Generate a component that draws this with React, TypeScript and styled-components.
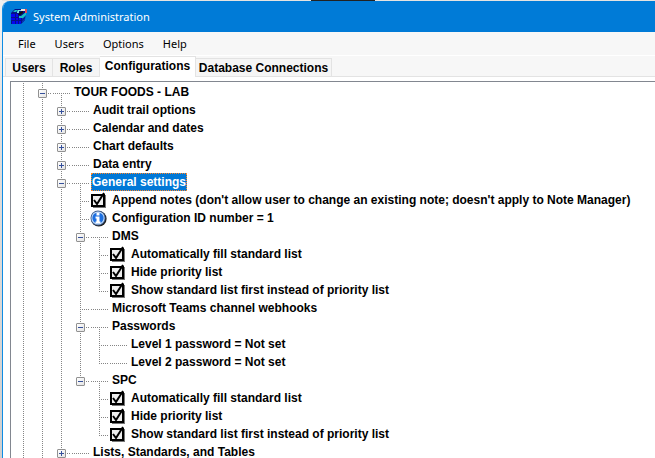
import React, { useState } from "react";
import styled, { createGlobalStyle, css } from "styled-components";

const GlobalStyle = createGlobalStyle`
  * { box-sizing: border-box; }
  body { margin: 0; overflow: hidden; background: #e3e1df; }
  button, input { font: inherit; color: inherit; margin: 0; padding: 0; }
`;

const Desktop = styled.div`
  display: flex;
  flex-direction: column;
  height: 100vh;
  padding-left: 2px;
  background: linear-gradient(#efefef 0, #efefef 40px, #e2dedb 120px, #dcd9d6 280px, #cfcfcf 100%);
`;

const BackdropEdge = styled.div`
  flex: none;
  height: 1px;
  background: linear-gradient(#222, #222) 309px 0 / 64px 1px no-repeat #e5e3e1;
`;

const Window = styled.main`
  flex: 1;
  min-height: 0;
  display: flex;
  flex-direction: column;
  border-left: 1px solid #0e8ce4;
  border-top-left-radius: 8px;
  background: #fff;
  overflow: hidden;
`;

const TitleBar = styled.header`
  flex: none;
  display: flex;
  align-items: center;
  gap: 5px;
  height: 31px;
  padding-left: 8px;
  background: #007bd7;
  color: #fff;
  font: 11px/16px "Noto Sans", "Open Sans", sans-serif;
`;

const Title = styled.h1`
  margin: 0;
  font: inherit;
`;

const MenuBar = styled.nav`
  flex: none;
  display: flex;
  gap: 19px;
  height: 24px;
  padding-left: 15px;
  background: #f7f7f7;
  border-bottom: 1px solid #fff;
  font: 11px/24px "Noto Sans", "Open Sans", sans-serif;
  color: #000;
`;

const MenuButton = styled.button`
  border: 0;
  background: none;
`;

const TabStrip = styled.div`
  flex: none;
  display: flex;
  align-items: flex-end;
  height: 21px;
  padding-left: 2px;
  background: linear-gradient(#e3e3e3, #e3e3e3) 0 100% / 100% 1px no-repeat #f7f7f7;
  font: bold 12px/16px "Liberation Sans", Arial, sans-serif;
  color: #000;
`;

const Tab = styled.button<{ $width: number }>`
  width: ${(p) => p.$width}px;
  height: 19px;
  border: 1px solid #e3e3e3;
  border-left-width: 0;
  background: #f5f5f5;
  white-space: nowrap;
  &:first-child { border-left-width: 1px; }
  &[aria-selected="true"] {
    height: 21px;
    padding-bottom: 3px;
    border-bottom: 0;
    background: #fff;
  }
`;

const TabPanel = styled.section`
  flex: 1;
  min-height: 0;
  display: flex;
  padding: 4px 0 0 7px;
`;

const TreeBox = styled.div`
  flex: 1;
  padding: 1px 0 0 3px;
  border: solid #828790;
  border-width: 1px 0 0 1px;
  overflow: hidden;
  font: bold 12px/18px "Liberation Sans", Arial, sans-serif;
  color: #000;
`;

const Row = styled.div`
  display: flex;
  height: 18px;
  white-space: nowrap;
`;

const vDots = "repeating-linear-gradient(#858585 0 1px, transparent 1px 2px)";
const hDots = "repeating-linear-gradient(90deg, #858585 0 1px, transparent 1px 2px)";

const GuideCell = styled.span<{ $line: boolean }>`
  flex: none;
  width: 19px;
  background: ${(p) => (p.$line ? `${vDots} 9px 0 / 1px 18px no-repeat` : "none")};
`;

const BranchCell = styled.span<{ $last: boolean }>`
  flex: none;
  display: flex;
  justify-content: center;
  align-items: flex-start;
  width: 19px;
  padding-top: 6px;
  background:
    ${vDots} 9px 0 / 1px ${(p) => (p.$last ? 11 : 18)}px no-repeat,
    ${hDots} 9px 10px / 10px 1px no-repeat;
`;

const IconCell = styled.span<{ $icon: boolean; $open: boolean }>`
  flex: none;
  display: flex;
  width: 20px;
  padding: 1px 0 0 0;
  ${(p) =>
    !p.$icon &&
    css`
      background:
        ${hDots} 1px 10px / 17px 1px no-repeat
        ${p.$open ? `, ${vDots} 9px 12px / 1px 6px no-repeat` : ""};
    `}
`;

const Expander = styled.button`
  display: flex;
  width: 9px;
  height: 9px;
  border: 1px solid #919191;
  border-radius: 1px;
  background: linear-gradient(135deg, #fff, #e4e4e4);
`;

const Label = styled.span<{ $selected: boolean }>`
  padding: 0 2px;
  ${(p) =>
    p.$selected &&
    css`
      padding: 0;
      border: 1px dotted #ff8728;
      background: #0078d7;
      color: #fff;
      line-height: 16px;
    `}
`;

const CheckLabel = styled.label`
  display: flex;
`;

const CheckBoxSlot = styled.span`
  position: relative;
  display: flex;
  flex: none;
  width: 20px;
  padding: 0 0 0 1px;
`;

const CheckInput = styled.input`
  position: absolute;
  inset: 0;
  opacity: 0;
`;

const CubeIcon = () => (
  <svg width="17" height="17" viewBox="0 0 17 17" aria-hidden="true">
    <path d="M0 5l4-4h11l-1 11-4 4H0z" fill="#04118a" />
    <path d="M0 6h4v3H0zM5 6h2v3H5zM0 10h4v2H0zM5 10h2v2H5zM8 10h2v2H8zM1 13h3v3H1zM5 13h2v3H5zM8 13h2v3H8z" fill="#0505f0" />
    <path d="M11 9l3-3v3l-3 3zM11 13l3-3v2l-3 3z" fill="#0a35b5" />
    <path d="M2 4l2-2h3L5 4zM10 8l5-4v3l-3 3H8V8z" fill="#18bfc4" />
    <path d="M7 2h4v1H8v2H6V4z" fill="#76e5df" />
    <path d="M9 4l3-1v2l-3 2H7z" fill="#111" />
    <path d="M10 1h4v2h-4z" fill="#e9e3df" />
    <path d="M14 1h2v4h-2z" fill="#e34a55" />
  </svg>
);

const CheckIcon = ({ checked }: { checked: boolean }) => (
  <svg width="16" height="17" viewBox="0 0 16 17" aria-hidden="true">
    <path d="M0 3h14v13H0z" fill="#000" />
    <path d="M14 4h1v13H2v-1h12z" fill="#777" />
    <path d="M2 5h10v9H2z" fill="#eee" />
    {checked && <path d="M3 9l3 4 7-11" fill="none" stroke="#000" strokeWidth="2" />}
  </svg>
);

const InfoIcon = () => (
  <svg width="17" height="17" viewBox="0 0 17 17" role="img" aria-label="Information">
    <circle cx="8.8" cy="8.8" r="7.8" fill="#222" />
    <circle cx="8" cy="8" r="7.5" fill="#3d5f94" />
    <circle cx="8" cy="8" r="6.6" fill="#c3dcf8" />
    <circle cx="8" cy="8" r="5.6" fill="#1d6fe0" />
    <path d="M6.5 2.5h3v3h-3zM5.5 6.5h4v5h1v2h-5v-2h1v-3h-1z" fill="#fff" />
  </svg>
);

const SignIcon = ({ open }: { open: boolean }) => (
  <svg width="7" height="7" viewBox="0 0 7 7" aria-hidden="true">
    <path d={open ? "M1 3h5v1H1z" : "M1 3h2V1h1v2h2v1H4v2H3V4H1z"} fill="#35509b" />
  </svg>
);

type Item = {
  id: string;
  text: string;
  kind?: "check" | "info";
  children?: Item[];
};

const listOptions = (prefix: string): Item[] => [
  { id: `${prefix}-fill`, text: "Automatically fill standard list", kind: "check" },
  { id: `${prefix}-hide`, text: "Hide priority list", kind: "check" },
  { id: `${prefix}-show`, text: "Show standard list first instead of priority list", kind: "check" },
];

const root: Item = {
  id: "site",
  text: "TOUR FOODS - LAB",
  children: [
    { id: "audit", text: "Audit trail options", children: [] },
    { id: "calendar", text: "Calendar and dates", children: [] },
    { id: "chart", text: "Chart defaults", children: [] },
    { id: "entry", text: "Data entry", children: [] },
    {
      id: "general",
      text: "General settings",
      children: [
        {
          id: "append",
          text: "Append notes (don't allow user to change an existing note; doesn't apply to Note Manager)",
          kind: "check",
        },
        { id: "config", text: "Configuration ID number = 1", kind: "info" },
        { id: "dms", text: "DMS", children: listOptions("dms") },
        { id: "teams", text: "Microsoft Teams channel webhooks" },
        {
          id: "passwords",
          text: "Passwords",
          children: [
            { id: "level1", text: "Level 1 password = Not set" },
            { id: "level2", text: "Level 2 password = Not set" },
          ],
        },
        { id: "spc", text: "SPC", children: listOptions("spc") },
      ],
    },
    { id: "lists", text: "Lists, Standards, and Tables", children: [] },
  ],
};

const initiallyOpen = ["site", "general", "dms", "passwords", "spc"];

type NodeProps = {
  item: Item;
  guides: boolean[];
  last: boolean;
  openIds: string[];
  onToggle: (id: string) => void;
  selected: string;
  onSelect: (id: string) => void;
};

function TreeNode({ item, guides, last, ...shared }: NodeProps) {
  const [checked, setChecked] = useState(true);
  const { openIds, onToggle, selected, onSelect } = shared;
  const open = openIds.includes(item.id);
  const children = item.children ?? [];
  const isSelected = selected === item.id;
  return (
    <>
      <Row role="treeitem" aria-level={guides.length} aria-selected={isSelected} aria-expanded={item.children ? open : undefined}>
        {guides.map((line, i) => (
          <GuideCell key={i} $line={line} />
        ))}
        <BranchCell $last={last}>
          {item.children && (
            <Expander type="button" aria-label={`Toggle ${item.text}`} onClick={() => onToggle(item.id)}>
              <SignIcon open={open} />
            </Expander>
          )}
        </BranchCell>
        {item.kind === "check" ? (
          <CheckLabel>
            <CheckBoxSlot>
              <CheckIcon checked={checked} />
              <CheckInput type="checkbox" checked={checked} onChange={() => setChecked(!checked)} />
            </CheckBoxSlot>
            <Label $selected={isSelected}>{item.text}</Label>
          </CheckLabel>
        ) : (
          <>
            <IconCell $icon={item.kind === "info"} $open={open}>
              {item.kind === "info" && <InfoIcon />}
            </IconCell>
            <Label $selected={isSelected} onClick={() => onSelect(item.id)}>
              {item.text}
            </Label>
          </>
        )}
      </Row>
      {open &&
        children.map((child, i) => (
          <TreeNode key={child.id} item={child} guides={[...guides, !last]} last={i === children.length - 1} {...shared} />
        ))}
    </>
  );
}

const menus = ["File", "Users", "Options", "Help"];
const tabs = [
  { name: "Users", width: 48 },
  { name: "Roles", width: 47 },
  { name: "Configurations", width: 96 },
  { name: "Database Connections", width: 136 },
];

export default function App() {
  const [tab, setTab] = useState("Configurations");
  const [openIds, setOpenIds] = useState(initiallyOpen);
  const [selected, setSelected] = useState("general");
  const toggle = (id: string) =>
    setOpenIds((ids) => (ids.includes(id) ? ids.filter((x) => x !== id) : [...ids, id]));

  return (
    <Desktop>
      <GlobalStyle />
      <BackdropEdge />
      <Window>
        <TitleBar>
          <CubeIcon />
          <Title>System Administration</Title>
        </TitleBar>
        <MenuBar>
          {menus.map((name) => (
            <MenuButton key={name} type="button">
              {name}
            </MenuButton>
          ))}
        </MenuBar>
        <TabStrip role="tablist">
          {tabs.map(({ name, width }) => (
            <Tab key={name} type="button" role="tab" aria-selected={tab === name} $width={width} onClick={() => setTab(name)}>
              {name}
            </Tab>
          ))}
        </TabStrip>
        <TabPanel role="tabpanel">
          <TreeBox role="tree">
            <TreeNode
              item={root}
              guides={[true]}
              last={false}
              openIds={openIds}
              onToggle={toggle}
              selected={selected}
              onSelect={setSelected}
            />
          </TreeBox>
        </TabPanel>
      </Window>
    </Desktop>
  );
}
